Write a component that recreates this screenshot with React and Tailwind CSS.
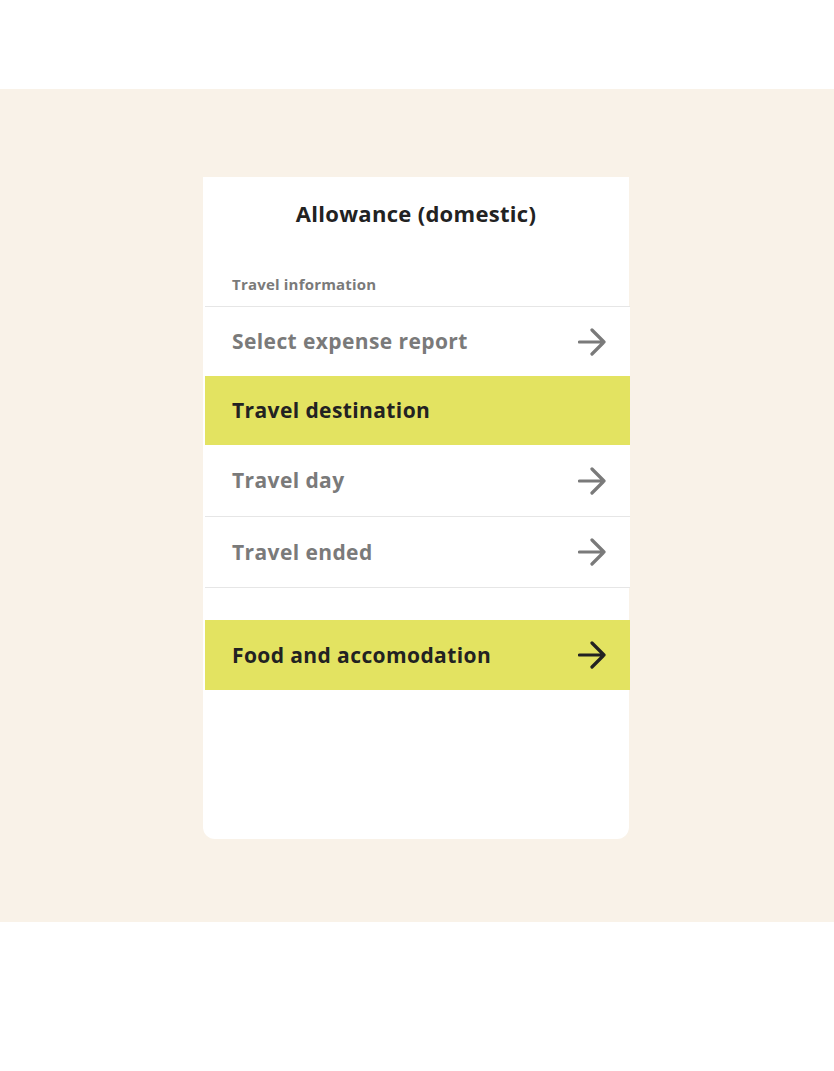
import React from "react";

const Arrow = ({ className }) => (
  <svg
    width="28"
    height="28"
    viewBox="0 0 28 28"
    fill="none"
    stroke="currentColor"
    strokeWidth="3.2"
    strokeLinecap="round"
    strokeLinejoin="round"
    className={className}
  >
    <path d="M1.5 14H26M14 2l12 12-12 12" />
  </svg>
);

const Row = ({ label, active, arrow, border, h }) => (
  <div
    className={`ml-[2px] w-[425px] ${h} flex items-center justify-between pl-[27px] pr-[24px] ${
      active ? "bg-[#e3e361] text-[#222222]" : "bg-white text-[#7a7a7a]"
    } ${border ? "border-b border-[#e6e6e6]" : ""}`}
  >
    <span className="text-[21px] font-bold leading-none tracking-[0.4px]">{label}</span>
    {arrow && <Arrow className={active ? "text-[#222222]" : "text-[#7a7a7a]"} />}
  </div>
);

export default function App() {
  return (
    <div className="w-[834px] h-[1071px] bg-white font-['Open_Sans',sans-serif]">
      <div className="h-[89px]" />
      <div className="h-[833px] bg-[#f9f2e8] pt-[88px] pl-[203px]">
        <div className="w-[426px] h-[662px] bg-white rounded-b-[12px] flex flex-col">
          <h1 className="pt-[25px] h-[77px] text-center text-[22px] leading-none font-bold tracking-[0.3px] text-[#222222]">
            Allowance (domestic)
          </h1>
          <div className="ml-[2px] w-[425px] h-[53px] border-b border-[#e6e6e6] pl-[27px] pt-[23px] text-[15px] leading-none font-bold tracking-[0.2px] text-[#7a7a7a]">
            Travel information
          </div>
          <Row label="Select expense report" arrow h="h-[69px]" />
          <Row label="Travel destination" active h="h-[69px]" />
          <Row label="Travel day" arrow border h="h-[72px]" />
          <Row label="Travel ended" arrow border h="h-[71px]" />
          <div className="h-[32px]" />
          <Row label="Food and accomodation" arrow active h="h-[70px]" />
        </div>
      </div>
    </div>
  );
}
